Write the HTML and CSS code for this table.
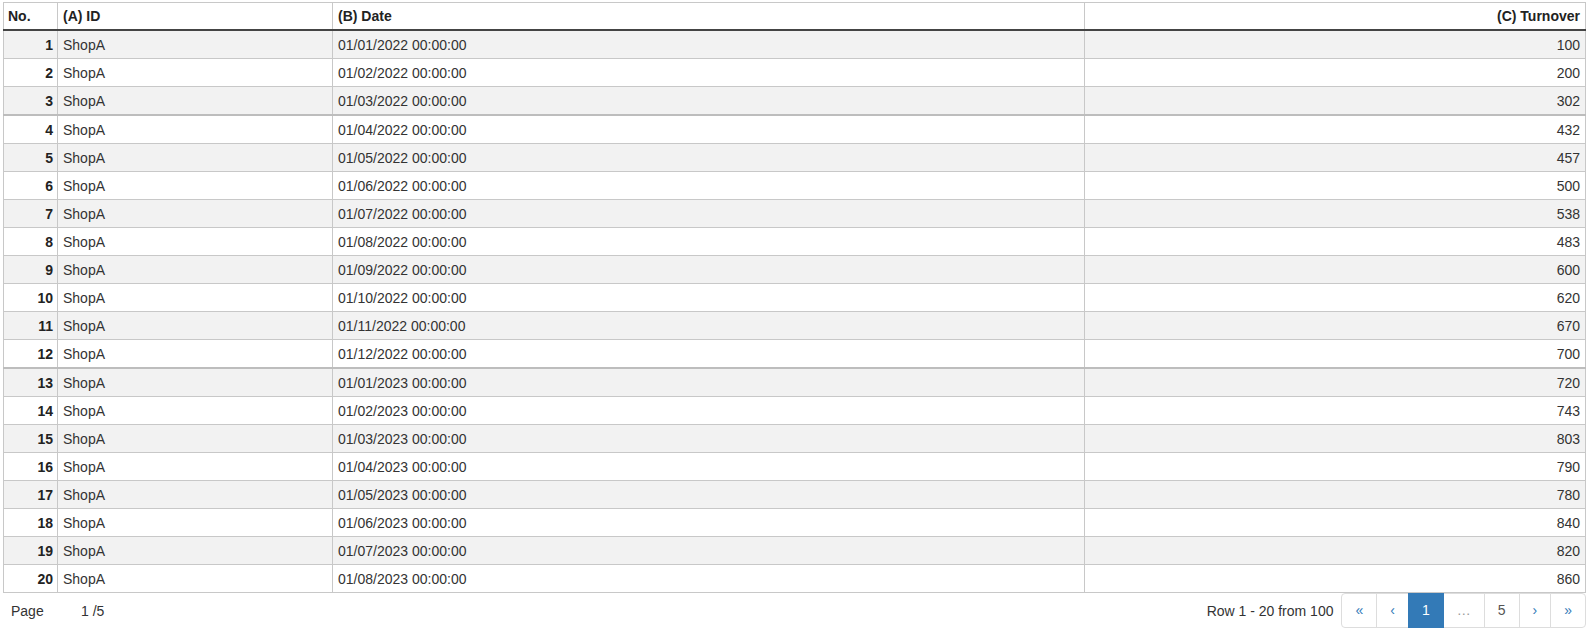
FILE: index.html
```html
<!DOCTYPE html>
<html>
<head>
<meta charset="utf-8">
<link rel="stylesheet" href="styles.css">
</head>
<body>
<div class="wrap">
  <table class="grid">
    <colgroup>
      <col class="c-no"><col class="c-id"><col class="c-date"><col class="c-turn">
    </colgroup>
    <thead>
      <tr><th class="num-h">No.</th><th>(A) ID</th><th>(B) Date</th><th class="r">(C) Turnover</th></tr>
    </thead>
    <tbody>
      <tr><td class="no">1</td><td>ShopA</td><td>01/01/2022 00:00:00</td><td class="r">100</td></tr>
      <tr><td class="no">2</td><td>ShopA</td><td>01/02/2022 00:00:00</td><td class="r">200</td></tr>
      <tr><td class="no">3</td><td>ShopA</td><td>01/03/2022 00:00:00</td><td class="r">302</td></tr>
      <tr class="sep"><td class="no">4</td><td>ShopA</td><td>01/04/2022 00:00:00</td><td class="r">432</td></tr>
      <tr><td class="no">5</td><td>ShopA</td><td>01/05/2022 00:00:00</td><td class="r">457</td></tr>
      <tr><td class="no">6</td><td>ShopA</td><td>01/06/2022 00:00:00</td><td class="r">500</td></tr>
      <tr><td class="no">7</td><td>ShopA</td><td>01/07/2022 00:00:00</td><td class="r">538</td></tr>
      <tr><td class="no">8</td><td>ShopA</td><td>01/08/2022 00:00:00</td><td class="r">483</td></tr>
      <tr><td class="no">9</td><td>ShopA</td><td>01/09/2022 00:00:00</td><td class="r">600</td></tr>
      <tr><td class="no">10</td><td>ShopA</td><td>01/10/2022 00:00:00</td><td class="r">620</td></tr>
      <tr><td class="no">11</td><td>ShopA</td><td>01/11/2022 00:00:00</td><td class="r">670</td></tr>
      <tr><td class="no">12</td><td>ShopA</td><td>01/12/2022 00:00:00</td><td class="r">700</td></tr>
      <tr class="sep"><td class="no">13</td><td>ShopA</td><td>01/01/2023 00:00:00</td><td class="r">720</td></tr>
      <tr><td class="no">14</td><td>ShopA</td><td>01/02/2023 00:00:00</td><td class="r">743</td></tr>
      <tr><td class="no">15</td><td>ShopA</td><td>01/03/2023 00:00:00</td><td class="r">803</td></tr>
      <tr><td class="no">16</td><td>ShopA</td><td>01/04/2023 00:00:00</td><td class="r">790</td></tr>
      <tr><td class="no">17</td><td>ShopA</td><td>01/05/2023 00:00:00</td><td class="r">780</td></tr>
      <tr><td class="no">18</td><td>ShopA</td><td>01/06/2023 00:00:00</td><td class="r">840</td></tr>
      <tr><td class="no">19</td><td>ShopA</td><td>01/07/2023 00:00:00</td><td class="r">820</td></tr>
      <tr><td class="no">20</td><td>ShopA</td><td>01/08/2023 00:00:00</td><td class="r">860</td></tr>
    </tbody>
  </table>
  <div class="footer">
    <div class="pageinfo"><span class="lbl">Page</span><span class="val">1 /5</span></div>
    <div class="right">
      <span class="rows">Row 1 - 20 from 100</span>
      <ul class="pager">
        <li><a>&laquo;</a></li>
        <li><a>&lsaquo;</a></li>
        <li class="active"><a>1</a></li>
        <li class="dis"><a>&hellip;</a></li>
        <li class="plain"><a>5</a></li>
        <li><a>&rsaquo;</a></li>
        <li><a>&raquo;</a></li>
      </ul>
    </div>
  </div>
</div>
</body>
</html>
```
FILE: styles.css
```css
html, body {
  margin: 0;
  padding: 0;
  background: #fff;
}
body {
  font-family: "Liberation Sans", Arial, sans-serif;
  font-size: 14px;
  color: #333;
}
.wrap {
  padding: 2px 5px 0 3px;
}
.grid {
  width: 1583px;
  border-collapse: collapse;
  table-layout: fixed;
}
.c-no { width: 54px; }
.c-id { width: 275px; }
.c-date { width: 752px; }
.c-turn { width: auto; }
.grid th, .grid td {
  border: 1px solid #c8c8c8;
  padding: 2px 5px 0 5px;
  line-height: 25px;
  white-space: nowrap;
  text-align: left;
  vertical-align: middle;
}
.grid th {
  font-weight: bold;
  color: #222;
  padding-top: 1px;
  line-height: 25px;
  border-bottom: 2px solid #444;
}
.grid th.num-h { padding-left: 4px; }
.grid .r { text-align: right; }
.grid td.no {
  text-align: right;
  font-weight: bold;
  padding-right: 4px;
  color: #222;
}
.grid tbody tr:nth-child(odd) td { background: #f2f2f2; }
.grid tbody tr.sep td { border-top: 2px solid #bdbdbd; }
.footer {
  display: flex;
  justify-content: space-between;
  align-items: center;
  height: 35px;
}
.pageinfo {
  display: flex;
  padding-left: 8px;
}
.pageinfo .lbl { width: 70px; }
.right {
  display: flex;
  align-items: center;
  gap: 8px;
}
.pager {
  display: flex;
  list-style: none;
  margin: 0;
  padding: 0;
}
.pager li a {
  display: block;
  height: 33px;
  line-height: 33px;
  padding: 0 13px;
  text-align: center;
  border: 1px solid #ddd;
  margin-left: -1px;
  color: #337ab7;
  background: #fff;
}
.pager li:first-child a {
  margin-left: 0;
  border-radius: 4px 0 0 4px;
}
.pager li:last-child a { border-radius: 0 4px 4px 0; }
.pager li.active a {
  background: #337ab7;
  border-color: #337ab7;
  color: #fff;
  position: relative;
}
.pager li.dis a { color: #999; }
.pager li.plain a { color: #555; }
```
